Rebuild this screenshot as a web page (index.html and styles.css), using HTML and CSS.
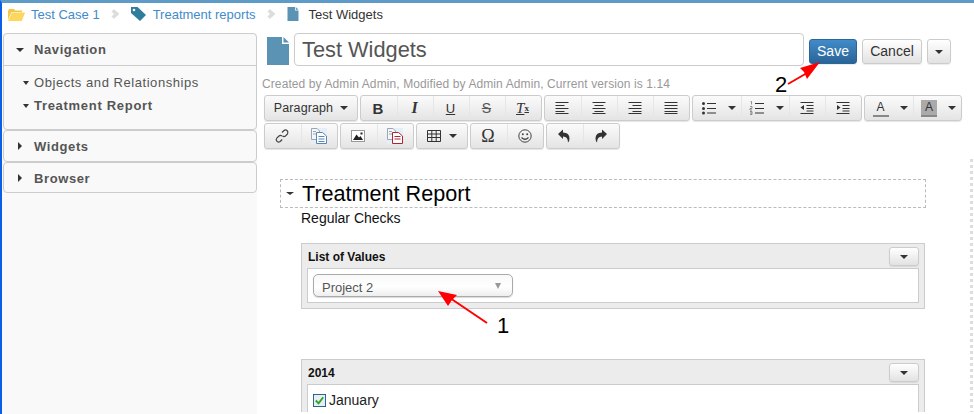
FILE: index.html
```html
<!doctype html>
<html lang="en">
<head>
    <meta charset="UTF-8">
    <title>Test Widgets</title>
    <link rel="stylesheet" href="styles.css">
</head>
<body>
    <svg class="sprite" xmlns="http://www.w3.org/2000/svg">
        <symbol id="i-doc" viewBox="0 0 22 28">
            <path d="M0 0H15V7H22V28H0Z" fill="#5b93b5"/>
            <path d="M16.500 0L22 5.500H16.500Z" fill="#5b93b5"/>
        </symbol>
        <symbol id="i-left" viewBox="0 0 16 14">
            <path d="M1.500 1.500H14.500M1.500 4.500H10.500M1.500 7.500H14.500M1.500 10.500H10.500M1.500 12.500H14.500" stroke="#333" fill="none"/>
        </symbol>
        <symbol id="i-center" viewBox="0 0 16 14">
            <path d="M1.500 1.500H14.500M3.500 4.500H12.500M1.500 7.500H14.500M3.500 10.500H12.500M1.500 12.500H14.500" stroke="#333" fill="none"/>
        </symbol>
        <symbol id="i-right" viewBox="0 0 16 14">
            <path d="M1.500 1.500H14.500M5.500 4.500H14.500M1.500 7.500H14.500M5.500 10.500H14.500M1.500 12.500H14.500" stroke="#333" fill="none"/>
        </symbol>
        <symbol id="i-just" viewBox="0 0 16 14">
            <path d="M1.500 1.500H14.500M1.500 4.500H14.500M1.500 7.500H14.500M1.500 10.500H14.500M1.500 12.500H14.500" stroke="#333" fill="none"/>
        </symbol>
        <symbol id="i-bullets" viewBox="0 0 16 14">
            <path d="M6 2.500H15M6 7.500H15M6 12H15" stroke="#333" fill="none"/>
            <circle cx="2.500" cy="2.500" r="1.500" fill="#333"/>
            <circle cx="2.500" cy="7.500" r="1.500" fill="#333"/>
            <circle cx="2.500" cy="12" r="1.500" fill="#333"/>
        </symbol>
        <symbol id="i-numbers" viewBox="0 0 16 14">
            <path d="M6 2.500H15M6 7.500H15M6 12H15" stroke="#333" fill="none"/>
            <path d="M1.500 0.500H2.500V3.500M1 5.500H3V7.500H1V9H3M1 10.500H3V13.500H1M1 12H3" stroke="#777" stroke-width="0.8" fill="none"/>
        </symbol>
        <symbol id="i-outdent" viewBox="0 0 16 14">
            <path d="M1.500 1.500H14.500M7.500 4.500H14.500M7.500 7.500H14.500M7.500 10H14.500M1.500 12.500H14.500" stroke="#333" fill="none"/>
            <path d="M5 4V9L1.500 6.500Z" fill="#333"/>
        </symbol>
        <symbol id="i-indent" viewBox="0 0 16 14">
            <path d="M1.500 1.500H14.500M7.500 4.500H14.500M7.500 7.500H14.500M7.500 10H14.500M1.500 12.500H14.500" stroke="#333" fill="none"/>
            <path d="M2 4V9L5.500 6.500Z" fill="#333"/>
        </symbol>
        <symbol id="i-link" viewBox="0 0 16 16">
            <path d="M8 4.500L10 2.500Q11.500 1.200 13 2.500T13.500 6L11.500 8Q10 9.300 8.500 8M8 8Q6.500 6.800 5 8L2.800 10.200Q1.500 11.700 2.800 13.200T6.200 13.500L8.200 11.500" stroke="#444" stroke-width="1.200" fill="none"/>
        </symbol>
        <symbol id="i-paste" viewBox="0 0 16 16">
            <rect width="16" height="16" fill="#e6eef7"/>
            <path d="M0.500 0.500H6L8.500 3V11.500H0.500Z" fill="#f6f6f6" stroke="#98a6b8"/>
            <path d="M2 3.500H5M2 6H6" stroke="#98a6b8"/>
            <path d="M5.500 4.500H11.500L15.500 8V15.500H5.500Z" fill="#fff" stroke="#5b87b8"/>
            <path d="M7.500 8.500H13.500M7.500 11H13.500M7.500 13.500H13.500" stroke="#5b87b8"/>
        </symbol>
        <symbol id="i-paste-red" viewBox="0 0 16 16">
            <rect width="16" height="16" fill="#e6eef7"/>
            <path d="M0.500 0.500H6L8.500 3V11.500H0.500Z" fill="#f6f6f6" stroke="#98a6b8"/>
            <path d="M2 3.500H5M2 6H6" stroke="#98a6b8"/>
            <path d="M5.500 4.500H11.500L15.500 8V15.500H5.500Z" fill="#fff" stroke="#b32433"/>
            <path d="M7.500 8.500H13.500M7.500 11H13.500" stroke="#b32433"/>
        </symbol>
        <symbol id="i-image" viewBox="0 0 14 12">
            <rect x="0.500" y="0.500" width="13" height="11" fill="#fff" stroke="#999"/>
            <path d="M2 10L5.500 4.500L8 7.500L9.500 6L12 10Z" fill="#222"/>
            <rect x="9.500" y="2.500" width="2" height="2" fill="#222"/>
        </symbol>
        <symbol id="i-table" viewBox="0 0 14 12">
            <path d="M0.500 0.500H13.500V11.500H0.500ZM0.500 4H13.500M0.500 7.500H13.500M4.800 0.500V11.500M9.200 0.500V11.500" stroke="#333" fill="none"/>
        </symbol>
        <symbol id="i-smile" viewBox="0 0 14 14">
            <circle cx="7" cy="7" r="6.200" fill="none" stroke="#444"/>
            <circle cx="4.800" cy="5.200" r="1" fill="#444"/>
            <circle cx="9.200" cy="5.200" r="1" fill="#444"/>
            <path d="M3.500 8.500Q7 12 10.500 8.500" fill="none" stroke="#444" stroke-width="1.200"/>
        </symbol>
        <symbol id="i-undo" viewBox="0 0 12 14">
            <path d="M0 5L5 0.500V3.500Q11.500 3.500 11.500 9.500Q11.500 12 10 13.500Q10 7.500 5 7.500V10Z" fill="#333"/>
        </symbol>
        <symbol id="i-redo" viewBox="0 0 12 14">
            <path d="M12 5L7 0.500V3.500Q0.500 3.500 0.500 9.500Q0.500 12 2 13.500Q2 7.500 7 7.500V10Z" fill="#333"/>
        </symbol>
    </svg>

    <div class="crumbs">
        <svg class="crumb-folder" width="17" height="13" viewBox="0 0 17 13">
            <path d="M0 3L1 1H6L7 2.500H14V4H3.500L0 12Z" fill="#f2c84b"/>
            <path d="M3.800 4.500H17L13.800 13H0.200Z" fill="#fdd65e"/>
        </svg>
        <a class="crumb-link">Test Case 1</a>
        <span class="crumb-sep"></span>
        <svg class="crumb-tag" width="15" height="14" viewBox="0 0 15 14">
            <path d="M0 0H6.500L15 8L9 14L0 6Z" fill="#2f7d9c"/>
            <circle cx="3" cy="3" r="1.300" fill="#fff"/>
        </svg>
        <a class="crumb-link">Treatment reports</a>
        <span class="crumb-sep"></span>
        <svg class="crumb-doc" width="12" height="14"><use href="#i-doc"/></svg>
        <span class="crumb-current">Test Widgets</span>
    </div>

    <div class="columns">
        <div class="sidebar">
            <div class="panel">
                <div class="panel-head"><i class="caret-down"></i>Navigation</div>
                <div class="panel-body">
                    <div class="nav-item"><i class="caret-down"></i>Objects and Relationships</div>
                    <div class="nav-item nav-item-on"><i class="caret-down"></i>Treatment Report</div>
                </div>
            </div>
            <div class="panel panel-closed">
                <div class="panel-head"><i class="caret-right"></i>Widgets</div>
            </div>
            <div class="panel panel-closed">
                <div class="panel-head"><i class="caret-right"></i>Browser</div>
            </div>
        </div>

        <div class="main">
            <div class="title-row">
                <svg class="title-doc" width="22" height="28"><use href="#i-doc"/></svg>
                <div class="title-input">Test Widgets</div>
                <button class="btn btn-primary">Save</button>
                <button class="btn btn-cancel">Cancel</button>
                <button class="btn btn-drop"><i class="caret-down"></i></button>
            </div>
            <p class="meta">Created by Admin Admin, Modified by Admin Admin, Current version is 1.14</p>

            <div class="toolbar">
                <div class="tb-group"><button class="tb-btn tb-format">Paragraph<i class="caret-down"></i></button></div>
                <div class="tb-group">
                    <button class="tb-btn tb-b">B</button>
                    <button class="tb-btn tb-i">I</button>
                    <button class="tb-btn tb-u">U</button>
                    <button class="tb-btn tb-s">S</button>
                    <button class="tb-btn tb-x">T<sub>x</sub></button>
                </div>
                <div class="tb-group">
                    <button class="tb-btn"><svg width="16" height="14"><use href="#i-left"/></svg></button>
                    <button class="tb-btn"><svg width="16" height="14"><use href="#i-center"/></svg></button>
                    <button class="tb-btn"><svg width="16" height="14"><use href="#i-right"/></svg></button>
                    <button class="tb-btn"><svg width="16" height="14"><use href="#i-just"/></svg></button>
                </div>
                <div class="tb-group">
                    <button class="tb-btn tb-wide"><svg width="16" height="14"><use href="#i-bullets"/></svg><i class="caret-down"></i></button>
                    <button class="tb-btn tb-wide"><svg width="16" height="14"><use href="#i-numbers"/></svg><i class="caret-down"></i></button>
                    <button class="tb-btn"><svg width="16" height="14"><use href="#i-outdent"/></svg></button>
                    <button class="tb-btn"><svg width="16" height="14"><use href="#i-indent"/></svg></button>
                </div>
                <div class="tb-group">
                    <button class="tb-btn tb-wide"><span class="tb-color">A</span><i class="caret-down"></i></button>
                    <button class="tb-btn tb-wide"><span class="tb-color tb-back">A</span><i class="caret-down"></i></button>
                </div>
                <div class="tb-group">
                    <button class="tb-btn"><svg width="16" height="16"><use href="#i-link"/></svg></button>
                    <button class="tb-btn"><svg width="16" height="16"><use href="#i-paste"/></svg></button>
                </div>
                <div class="tb-group">
                    <button class="tb-btn"><svg width="14" height="12"><use href="#i-image"/></svg></button>
                    <button class="tb-btn"><svg width="16" height="16"><use href="#i-paste-red"/></svg></button>
                </div>
                <div class="tb-group">
                    <button class="tb-btn tb-table"><svg width="14" height="12"><use href="#i-table"/></svg><i class="caret-down"></i></button>
                </div>
                <div class="tb-group">
                    <button class="tb-btn tb-omega">Ω</button>
                    <button class="tb-btn"><svg width="14" height="14"><use href="#i-smile"/></svg></button>
                </div>
                <div class="tb-group">
                    <button class="tb-btn"><svg width="12" height="14"><use href="#i-undo"/></svg></button>
                    <button class="tb-btn"><svg width="12" height="14"><use href="#i-redo"/></svg></button>
                </div>
            </div>

            <div class="editor">
                <div class="doc">
                    <div class="section-head"><i class="caret-down caret-small"></i>Treatment Report</div>
                    <p class="section-sub">Regular Checks</p>

                    <div class="widget">
                        <div class="widget-head">List of Values<button class="btn btn-mini"><i class="caret-down"></i></button></div>
                        <div class="widget-body">
                            <div class="select">Project 2<i class="caret-down select-caret"></i></div>
                        </div>
                    </div>

                    <div class="widget widget-last">
                        <div class="widget-head">2014<button class="btn btn-mini"><i class="caret-down"></i></button></div>
                        <div class="widget-body">
                            <label class="check">
                                <svg width="14" height="14" viewBox="0 0 14 14">
                                    <rect x="0.500" y="0.500" width="13" height="13" fill="#e8eef0" stroke="#1f5a8c"/>
                                    <path d="M3 7L6 10L11 3.500" fill="none" stroke="#2aa52a" stroke-width="2"/>
                                </svg>January
                            </label>
                        </div>
                    </div>
                </div>
                <div class="dots"></div>
            </div>
        </div>
    </div>

    <!-- callouts drawn over the shot -->
    <svg class="callouts" width="974" height="414" viewBox="0 0 974 414">
        <path d="M788 84L807 73" stroke="#f00" stroke-width="2"/>
        <path d="M820 62L800 68L804 72L807 79Z" fill="#f00"/>
        <text x="775" y="92" class="callout-num">2</text>
        <path d="M487 323L450 298" stroke="#f00" stroke-width="2"/>
        <path d="M438 291L457 295L452 300L448 306Z" fill="#f00"/>
        <text x="497" y="333" class="callout-num">1</text>
    </svg>
</body>
</html>
```

FILE: styles.css
```css
* {margin:0; padding:0; box-sizing:border-box;}
html, body {height: 414px; overflow: hidden;}
body {
    position: relative;
    font-family: "Liberation Sans", Arial, sans-serif;
    background: #fff;
    border-top: 3px solid #5f9bc7;
    border-left: 2px solid #0a5fe6;
    color: #333;
}
.sprite {display: none;}
button {font-family: inherit; cursor: pointer;}

/* carets */
.caret-down, .caret-right {display: inline-block; width: 0; height: 0;}
.caret-down {border-top: 4px solid #333; border-left: 4px solid transparent; border-right: 4px solid transparent;}
.caret-right {border-left: 4px solid #333; border-top: 4px solid transparent; border-bottom: 4px solid transparent;}
.caret-small {border-top-width: 3px; border-left-width: 4px; border-right-width: 4px;}

/* breadcrumb */
.crumbs {
    height: 30px;
    display: flex;
    align-items: center;
    font-size: 13px;
    padding: 0 0 8px 6px;
}
.crumb-link {color: #428bca;}
.crumb-current {color: #333;}
.crumb-folder {margin-right: 6px;}
.crumb-tag {margin-right: 7px;}
.crumb-doc {margin-right: 10px;}
.crumb-sep {
    width: 6px; height: 6px;
    margin: 0 14px 0 11px;
    border-top: 3px solid #ddd;
    border-right: 3px solid #ddd;
    transform: rotate(45deg) scale(1.200);
}

.columns {display: flex; height: 381px;}

/* sidebar */
.sidebar {
    width: 255px;
    padding-left: 1px;
    background: #f9f9f9;
}
.panel {
    border: 1px solid #ccc;
    border-radius: 4px;
    background: #f9f9f9;
    height: 97px;
}
.panel-closed {height: 32px;}
.panel-closed + .panel-closed {height: 31px; border-top-width: 1px;}
.panel-head {
    height: 31px;
    display: flex;
    align-items: center;
    padding-left: 12px;
    font-size: 13px;
    font-weight: bold;
    letter-spacing: .6px;
    color: #555;
}
.panel-head .caret-down {margin-right: 10px;}
.panel-head .caret-right {margin: 0 12px 0 2px;}
.panel-closed .panel-head {height: 30px;}
.panel-body {border-top: 1px solid #ccc; padding-top: 5px;}
.nav-item {
    height: 23px;
    display: flex;
    align-items: center;
    padding-left: 19px;
    font-size: 13px;
    letter-spacing: .55px;
    color: #555;
}
.nav-item .caret-down {margin-right: 5px; border-left-width: 3.500px; border-right-width: 3.500px;}
.nav-item-on {font-weight: bold; letter-spacing: .7px;}

/* main column */
.main {flex: 1; min-width: 0; background: #fff;}
.title-row {
    display: flex;
    align-items: flex-start;
    gap: 5px;
    padding: 0 23px 0 10px;
}
.title-doc {margin-top: 4px;}
.title-input {
    flex: 1;
    height: 33px;
    border: 1px solid #ccc;
    border-radius: 4px;
    padding-left: 7px;
    font-size: 21.800px;
    line-height: 32px;
    color: #555;
}
.btn {
    height: 25px;
    margin-top: 6px;
    padding: 0 8px 1px;
    border: 1px solid #ccc;
    border-radius: 3px;
    background: linear-gradient(#fff, #e2e2e2);
    box-shadow: 0 1px 1px rgba(0,0,0,.08);
    font-size: 14px;
    color: #333;
}
.btn-primary {
    width: 48px;
    padding: 0 0 1px;
    color: #fff;
    border-color: #2b669a;
    background: linear-gradient(#428bca, #2a6496);
}
.btn-cancel {width: 60px; padding: 0 0 1px;}
.btn-drop {width: 24px; padding: 0; display: flex; align-items: center; justify-content: center;}
.btn-mini {
    width: 30px; height: 19px;
    margin: 0;
    padding: 0;
    display: flex;
    align-items: center;
    justify-content: center;
}
.meta {
    margin: 11px 0 4px 5px;
    height: 14px;
    font-size: 12px;
    line-height: 14px;
    color: #999;
    letter-spacing: .1px;
}

/* editor toolbar */
.toolbar {
    display: flex;
    flex-wrap: wrap;
    gap: 2px;
    margin-left: 7px;
    width: 704px;
}
.tb-group {
    display: flex;
    height: 26px;
    border: 1px solid #ccc;
    border-radius: 3px;
    background: linear-gradient(#fbfbfb, #e4e4e4);
    box-shadow: 0 1px 1px rgba(0,0,0,.1);
}
.tb-btn {
    width: 36px;
    display: flex;
    align-items: center;
    justify-content: center;
    padding-right: 2px;
    border: 0;
    border-left: 1px solid #e6e6e6;
    background: none;
    font-size: 14px;
    color: #333;
}
.tb-btn:first-child {border-left: 0;}
.tb-format {width: 92px; padding: 0; font-size: 12.500px; letter-spacing: .1px; gap: 7px;}
.tb-wide {width: 48px; gap: 11px; padding: 0 0 0 2px;}
.tb-table {width: 50px; gap: 8px; padding: 0;}
.tb-b {font-weight: bold; font-size: 15px;}
.tb-i {font-style: italic; font-weight: bold; font-family: "Liberation Serif", serif; font-size: 16px;}
.tb-u {text-decoration: underline; font-size: 13px;}
.tb-s {text-decoration: line-through; font-size: 14px; color: #555;}
.tb-x {font-style: italic; font-family: "Liberation Serif", serif; font-size: 15px; text-decoration: underline;}
.tb-x sub {font-size: 9px; font-style: normal; font-weight: bold;}
.tb-omega {font-family: "Liberation Serif", serif; font-size: 18px;}
.tb-color {
    width: 16px; height: 17px;
    font-size: 12px;
    line-height: 14px;
    text-align: center;
    border-bottom: 2px solid #888;
}
.tb-back {background: #aaa;}

/* document */
.editor {display: flex; align-items: flex-start; height: 263px; overflow: hidden;}
.doc {flex: 1; padding: 30px 0 0 23px; min-width: 0;}
.dots {
    width: 3px;
    height: 253px;
    margin: 10px 1px 0 0;
    background: repeating-linear-gradient(#ddd 0, #ddd 3px, transparent 3px, transparent 6px);
}
.section-head {
    width: 646px;
    height: 29px;
    display: flex;
    align-items: center;
    border: 1px dashed #bbb;
    padding-left: 5px;
    font-size: 21.600px;
    color: #000;
}
.section-head .caret-small {margin-right: 8px;}
.section-sub {
    margin: 1px 0 16px 21px;
    height: 18px;
    font-size: 14px;
    line-height: 18px;
    color: #111;
}
.widget {
    width: 624px;
    height: 66px;
    margin-left: 21px;
    margin-bottom: 50px;
    padding: 0 5px 5px 5px;
    background: #ececec;
    border: 1px solid #ccc;
}
.widget-last {height: 55px; margin: 0 0 0 21px; padding-bottom: 0; border-bottom: 0;}
.widget-head {
    height: 24px;
    display: flex;
    align-items: center;
    justify-content: space-between;
    font-size: 12px;
    font-weight: bold;
    color: #111;
    padding: 1px 0 0 1px;
}
.widget-body {
    height: 35px;
    border: 1px solid #ccc;
    background: #fff;
    padding: 5px 0 0 5px;
}
.widget-last .widget-body {height: 30px; padding-top: 9px; border-bottom: 0;}
.select {
    width: 200px;
    height: 23px;
    display: flex;
    align-items: center;
    justify-content: space-between;
    padding: 3px 11px 0 8px;
    border: 1px solid #aaa;
    border-radius: 5px;
    background: linear-gradient(#f8f8f8, #fff 55%, #eee);
    box-shadow: 0 1px 1px rgba(0,0,0,.15);
    font-size: 13px;
    color: #555;
}
.select-caret {border-top: 6px solid #999; border-left-width: 3.500px; border-right-width: 3.500px; margin-bottom: 2px;}
.check {display: flex; align-items: flex-start; gap: 3px; font-size: 14px; line-height: 13px; color: #222;}
.check svg {flex: none; width: 13px; height: 13px;}

/* red callouts */
.callouts {position: absolute; left: -2px; top: -3px; pointer-events: none;}
.callout-num {font-size: 22px; fill: #000;}
```
